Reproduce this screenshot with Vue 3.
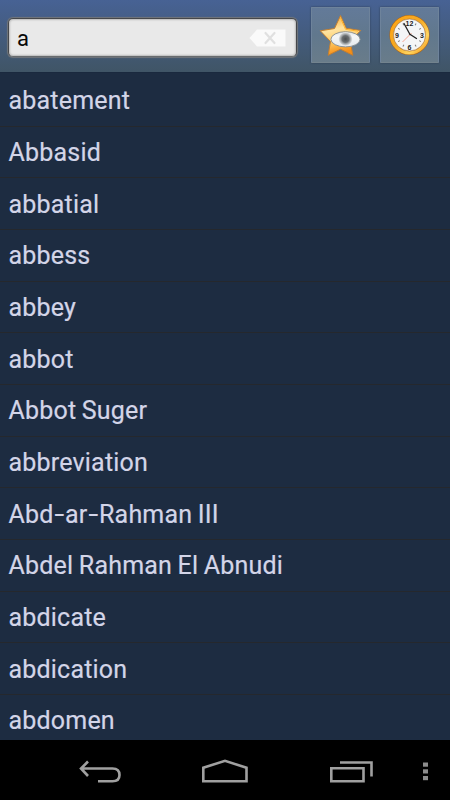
<script setup>
const words = [
  'abatement', 'Abbasid', 'abbatial', 'abbess', 'abbey', 'abbot', 'Abbot Suger',
  'abbreviation', 'Abd-ar-Rahman III', 'Abdel Rahman El Abnudi', 'abdicate',
  'abdication', 'abdomen'
]
const parts = (word) => word.split(/(-)/)
const ticks = [30, 60, 120, 150, 210, 240, 300, 330]
</script>

<template>
  <div class="screen">
    <header class="bar">
      <div class="field">
        <span class="query">a</span>
        <svg class="clear" width="37" height="18" viewBox="0 0 37 18">
          <path d="M0.5 9 8 0.5H36.500V17.500H8Z" fill="#fafafa" />
          <path d="M16.500 4 25.500 14M25.500 4 16.500 14" stroke="#e0e0e0" stroke-width="2.200" stroke-linecap="round" />
        </svg>
      </div>
      <button class="tool" aria-label="Favourites">
        <svg width="43" height="44" viewBox="0.5 0 43 44">
          <defs>
            <linearGradient id="star" x1="0" y1="0" x2="0.25" y2="1">
              <stop offset="0" stop-color="#f7a01e" />
              <stop offset="0.42" stop-color="#ffe3a0" />
              <stop offset="0.68" stop-color="#ffcf6b" />
              <stop offset="1" stop-color="#f58e16" />
            </linearGradient>
            <radialGradient id="iris">
              <stop offset="0" stop-color="#4b4f51" />
              <stop offset="0.5" stop-color="#6a6e70" />
              <stop offset="0.7" stop-color="#a0a4a6" />
              <stop offset="1" stop-color="#e3e6e8" />
            </radialGradient>
            <linearGradient id="white" x1="0" y1="0" x2="0" y2="1">
              <stop offset="0" stop-color="#dde1e4" />
              <stop offset="0.3" stop-color="#f5f7f8" />
              <stop offset="1" stop-color="#e5e9ec" />
            </linearGradient>
          </defs>
          <path d="M22 2.500 27.700 15.300 42.200 17.500 31.800 28 34.300 42.300 22 36.200 9.700 42.300 12 28.500 1.800 17.800 16 15.500Z" fill="url(#star)" stroke="#c47f30" stroke-width="1" stroke-linejoin="round" />
          <path d="M22 5 27 16.300 39.500 18.200" fill="none" stroke="#ffb52f" stroke-width="1" />
          <ellipse cx="27" cy="26.300" rx="14.600" ry="7.600" fill="url(#white)" stroke="#858b90" stroke-width="0.900" />
          <circle cx="27" cy="26" r="6.800" fill="url(#iris)" />
        </svg>
      </button>
      <button class="tool" aria-label="History">
        <svg width="43" height="44" viewBox="0.5 0 43 44">
          <defs>
            <linearGradient id="rim" x1="0" y1="0" x2="1" y2="1">
              <stop offset="0" stop-color="#ffa514" />
              <stop offset="0.45" stop-color="#f5a923" />
              <stop offset="0.75" stop-color="#ffd45e" />
              <stop offset="1" stop-color="#f08c0b" />
            </linearGradient>
          </defs>
          <circle cx="22" cy="22" r="17.800" fill="none" stroke="#a8661c" stroke-width="4.600" />
          <circle cx="22" cy="22" r="17.900" fill="none" stroke="url(#rim)" stroke-width="3.400" />
          <circle cx="22" cy="22" r="16" fill="#f4f5f7" stroke="#bd8842" stroke-width="0.700" />
          <path v-for="t in ticks" :key="t" d="M22 8.800V10.800" :transform="`rotate(${t} 22 22)`" stroke="#777" stroke-width="1" />
          <g class="digits">
            <text x="22" y="12.500">12</text>
            <text x="34.500" y="24.500">3</text>
            <text x="22" y="37">6</text>
            <text x="9.500" y="24.500">9</text>
          </g>
          <path d="M24 20 15 29" stroke="#f39a85" stroke-width="0.900" />
          <path d="M22.500 21.500 16.500 10.500M22 21 29 25.500" stroke="#222" stroke-width="1.300" stroke-linecap="round" />
        </svg>
      </button>
    </header>

    <main class="list">
      <div v-for="word in words" :key="word" class="row">
        <span class="word"><span v-for="(p, i) in parts(word)" :key="i" :class="{ dash: p === '-' }">{{ p }}</span></span>
      </div>
    </main>

    <nav class="nav">
      <svg width="450" height="60" viewBox="0 0 450 60" fill="none" stroke="#a0a0a0" stroke-width="2.600">
        <path d="M81 28.500H112.500C117 28.500 119.500 31 119.500 35S117 41.300 112.500 41.300H98M88 21.500 81 28.500 88 36" />
        <path d="M203.300 41.300V27.800L225 20.800 246.500 27.800V41.300Z" />
        <path d="M331.300 28.300H363.500V41.300H331.300ZM340 22.500H371.500V36.500" />
        <g fill="#8c8c8c" stroke="none">
          <rect x="423" y="22.500" width="5" height="4.200" />
          <rect x="423" y="29.300" width="5" height="4.200" />
          <rect x="423" y="36" width="5" height="4.200" />
        </g>
      </svg>
    </nav>
  </div>
</template>

<style>
body {
  margin: 0;
  background: #000;
}
</style>

<style scoped>
.screen {
  width: 450px;
  height: 800px;
  display: flex;
  flex-direction: column;
  overflow: hidden;
  background: #1d2c41;
  font-family: Roboto, "Liberation Sans", sans-serif;
}
.bar {
  box-sizing: border-box;
  height: 72px;
  flex: none;
  display: flex;
  align-items: flex-start;
  gap: 10px;
  padding: 7px 10px 0 8px;
  background: linear-gradient(#476294, #405566);
}
.field {
  box-sizing: border-box;
  width: 289px;
  height: 39px;
  margin: 11px 4px 0 0;
  padding: 0 10px 0 8px;
  display: flex;
  align-items: center;
  justify-content: space-between;
  border: 1px solid #45474b;
  border-bottom-color: #676b6e;
  border-radius: 5px;
  background: #e9e9e9;
  box-shadow: 0 0 1px 1px #72767a, inset 0 0 2px 1px #b9b9b9;
}
.query {
  font-size: 22px;
  line-height: 30px;
  color: #080808;
  padding-top: 3px;
}
.clear {
  display: block;
}
.tool {
  box-sizing: border-box;
  width: 59px;
  height: 56px;
  padding: 0;
  display: flex;
  align-items: center;
  justify-content: center;
  border: 1px solid #6e839b;
  border-bottom-color: #73838e;
  border-radius: 1px;
  background: linear-gradient(#637a99, #61788d 50%, #697c8a);
  box-shadow: 0 0 2px #2b3c50;
}
.digits {
  font-size: 7px;
  font-weight: 700;
  fill: #222;
  text-anchor: middle;
}
.list {
  box-sizing: border-box;
  height: 668px;
  flex: none;
  overflow: hidden;
  padding-top: 2px;
  border-top: 1px solid #1a293e;
}
.row {
  box-sizing: border-box;
  height: 51.67px;
  padding: 2px 0 0 8.500px;
  display: flex;
  align-items: center;
  border-bottom: 1px solid #25282d;
}
.word {
  font-size: 25px;
  line-height: 50px;
  letter-spacing: 0.2px;
  word-spacing: -0.9px;
  color: #d3d5e8;
  -webkit-text-stroke: 0.2px #d3d5e8;
  white-space: pre;
}
.dash {
  display: inline-block;
  transform: scaleX(1.4);
  margin: 0 2.200px;
}
.nav {
  height: 60px;
  flex: none;
  background: #000;
}
.nav svg {
  display: block;
}
</style>
